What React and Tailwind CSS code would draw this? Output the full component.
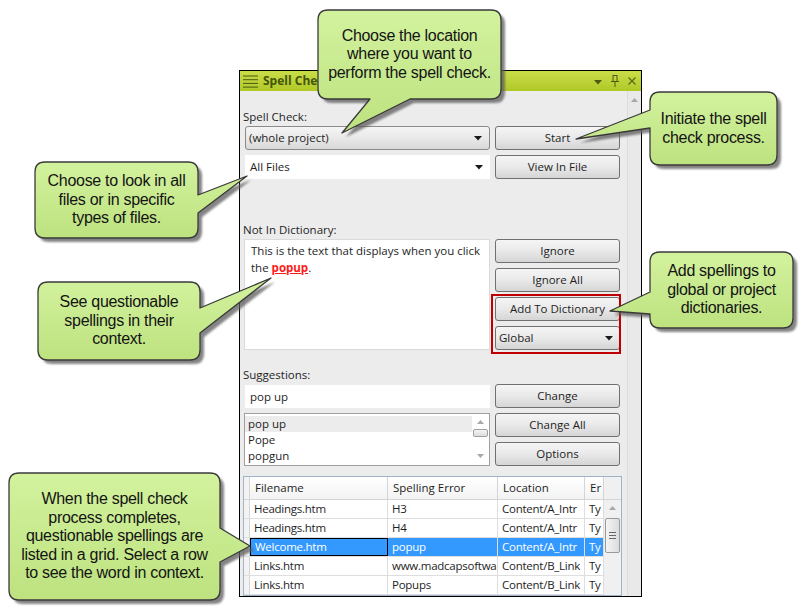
import React from "react";

const callouts = [
  { x: 318, y: 10, w: 183, h: 89, side: "bottom", a: 370, b: 410, tip: [342, 133], lines: ["Choose the location", "where you want to", "perform the spell check."] },
  { x: 650, y: 92, w: 127, h: 73, side: "left", a: 110, b: 128, tip: [576, 139], lines: ["Initiate the spell", "check process."] },
  { x: 35, y: 162, w: 163, h: 76, side: "right", a: 195, b: 213, tip: [247, 176], lines: ["Choose to look in all", "files or in specific", "types of files."] },
  { x: 38, y: 282, w: 162, h: 78, side: "right", a: 308, b: 333, tip: [271, 278], lines: ["See questionable", "spellings in their", "context."] },
  { x: 650, y: 252, w: 143, h: 76, side: "left", a: 292, b: 314, tip: [610, 311], lines: ["Add spellings to", "global or project", "dictionaries."] },
  { x: 9, y: 473, w: 211, h: 127, side: "right", a: 528, b: 562, tip: [250, 546], lines: ["When the spell check", "process completes,", "questionable spellings are", "listed in a grid. Select a row", "to see the word in context."] },
];

function calloutPath({ x, y, w, h, side, a, b, tip }, r = 10) {
  const [tx, ty] = tip;
  const R = x + w;
  const B = y + h;
  let d = `M${x + r},${y}`;
  if (side === "top") d += ` L${a},${y} L${tx},${ty} L${b},${y}`;
  d += ` L${R - r},${y} Q${R},${y} ${R},${y + r}`;
  if (side === "right") d += ` L${R},${a} L${tx},${ty} L${R},${b}`;
  d += ` L${R},${B - r} Q${R},${B} ${R - r},${B}`;
  if (side === "bottom") d += ` L${b},${B} L${tx},${ty} L${a},${B}`;
  d += ` L${x + r},${B} Q${x},${B} ${x},${B - r}`;
  if (side === "left") d += ` L${x},${b} L${tx},${ty} L${x},${a}`;
  d += ` L${x},${y + r} Q${x},${y} ${x + r},${y} Z`;
  return d;
}

function Arrow({ className = "" }) {
  return (
    <svg width="8" height="5" viewBox="0 0 8 5" className={className}>
      <path d="M0 0 H8 L4 4.5 Z" fill="#1a1a1a" />
    </svg>
  );
}

const btn =
  "h-[24px] w-[125px] shrink-0 rounded-[3px] border border-[#707070] bg-linear-to-b from-[#f5f5f5] via-[#e9e9e9] to-[#d5d5d5] flex items-center justify-center text-[#1e1e1e]";

function Btn({ children, className = "" }) {
  return <div className={`${btn} ${className}`}>{children}</div>;
}

function ScrollUp() {
  return (
    <svg width="7" height="4" viewBox="0 0 7 4">
      <path d="M0 4 L3.5 0 L7 4 Z" fill="#a8a8a8" />
    </svg>
  );
}
function ScrollDown() {
  return (
    <svg width="7" height="4" viewBox="0 0 7 4">
      <path d="M0 0 L3.5 4 L7 0 Z" fill="#a8a8a8" />
    </svg>
  );
}

const rows = [
  ["Headings.htm", "H3", "Content/A_Intr", "Ty"],
  ["Headings.htm", "H4", "Content/A_Intr", "Ty"],
  ["Welcome.htm", "popup", "Content/A_Intr", "Ty", true],
  ["Links.htm", "www.madcapsoftwa", "Content/B_Link", "Ty"],
  ["Links.htm", "Popups", "Content/B_Link", "Ty"],
];
const colW = ["w-[138px]", "w-[110px]", "w-[87px]", "w-[19px]"];

function Grid() {
  return (
    <div className="mt-[10px] w-[379px] h-[125px] border border-[#9fb3cb] bg-white flex flex-col overflow-hidden">
      <div className="flex h-[23px] shrink-0 border-b border-[#d5d5d5] bg-linear-to-b from-[#ffffff] to-[#f3f3f3]">
        <div className="w-[6px] border-r border-[#d5d5d5] bg-[#f3f3f3]" />
        {["Filename", "Spelling Error", "Location", "Er"].map((t, i) => (
          <div key={t} className={`${colW[i]} shrink-0 border-r border-[#d5d5d5] pl-[5px] flex items-center overflow-hidden whitespace-nowrap`}>
            {t}
          </div>
        ))}
        <div className="flex-1 bg-[#f0f0f0]" />
      </div>
      <div className="flex flex-1">
        <div className="flex flex-col">
          {rows.map((r, ri) => {
            const sel = r[4];
            return (
              <div key={ri} className={`flex h-[19px] shrink-0 border-b border-[#dedede] ${sel ? "bg-[#3399ff] text-white" : ""}`}>
                <div className="w-[6px] shrink-0 border-r border-[#d5d5d5] bg-[#f3f3f3]" />
                {r.slice(0, 4).map((c, ci) => (
                  <div
                    key={ci}
                    className={`${colW[ci]} shrink-0 pl-[4px] flex items-center overflow-hidden whitespace-nowrap tracking-[-0.25px] ${
                      sel && ci === 0 ? "border border-black" : "border-r border-[#dedede]"
                    }`}
                  >
                    {c}
                  </div>
                ))}
              </div>
            );
          })}
        </div>
        <div className="flex-1 bg-[#f0f0f0] flex flex-col items-center pt-[6px]">
          <ScrollUp />
          <div className="mt-[8px] w-[15px] h-[35px] rounded-[2px] border border-[#999] bg-linear-to-r from-[#f4f4f4] to-[#dcdcdc] flex flex-col items-center justify-center gap-[2px]">
            <div className="w-[7px] h-[1px] bg-[#666]" />
            <div className="w-[7px] h-[1px] bg-[#666]" />
            <div className="w-[7px] h-[1px] bg-[#666]" />
          </div>
        </div>
      </div>
    </div>
  );
}

function Panel() {
  return (
    <div className="ml-[239px] mt-[70px] w-[403px] h-[527px] border border-black flex flex-col bg-[#ececec] overflow-hidden">
      <div className="h-[20px] shrink-0 bg-linear-to-b from-[#cadd48] to-[#b0c826] flex items-center pl-[3px] pr-[5px] text-[#44550a]">
        <svg width="15" height="13" viewBox="0 0 15 13">
          <rect x="0" y="0.5" width="15" height="1" fill="#4a5a10" />
          <rect x="0" y="4.2" width="15" height="1" fill="#4a5a10" />
          <rect x="0" y="7.9" width="15" height="1" fill="#4a5a10" />
          <rect x="0" y="11.6" width="15" height="1" fill="#4a5a10" />
        </svg>
        <span className="ml-[5px] font-bold text-[12px]">Spell Check</span>
        <div className="flex-1" />
        <svg width="8" height="5" viewBox="0 0 8 5" className="mr-[9px] mt-[2px]">
          <path d="M0 0 H8 L4 4.5 Z" fill="#4a5a10" />
        </svg>
        <svg width="8" height="12" viewBox="0 0 8 12" className="mr-[9px]">
          <rect x="2" y="0.5" width="4" height="6" fill="none" stroke="#4a5a10" strokeWidth="1" />
          <line x1="0" y1="6.5" x2="8" y2="6.5" stroke="#4a5a10" strokeWidth="1" />
          <line x1="4" y1="6.5" x2="4" y2="12" stroke="#4a5a10" strokeWidth="1" />
        </svg>
        <svg width="8" height="8" viewBox="0 0 8 8">
          <path d="M0.5 0.5 L7.5 7.5 M7.5 0.5 L0.5 7.5" stroke="#5a6b18" strokeWidth="1.2" />
        </svg>
      </div>
      <div className="flex flex-1 min-h-0">
        <div className="flex-1 pl-[3px] flex flex-col text-[#1e1e1e]">
          <div className="mt-[18px] h-[16px] leading-[16px]">Spell Check:</div>
          <div className="mt-[1px] ml-[2px] flex gap-[5px]">
            <div className="h-[24px] w-[245px] rounded-[3px] border border-[#8a8a8a] bg-linear-to-b from-[#f5f5f5] via-[#e9e9e9] to-[#d8d8d8] flex items-center pl-[3px] pr-[7px]">
              <span className="flex-1">(whole project)</span>
              <Arrow />
            </div>
            <Btn>Start</Btn>
          </div>
          <div className="mt-[5px] ml-[2px] flex gap-[5px]">
            <div className="h-[24px] w-[245px] bg-white flex items-center pl-[5px] pr-[7px]">
              <span className="flex-1">All Files</span>
              <Arrow />
            </div>
            <Btn>View In File</Btn>
          </div>
          <div className="mt-[43px] h-[16px] leading-[16px]">Not In Dictionary:</div>
          <div className="mt-[1px] ml-[1px] flex gap-[5px]">
            <div className="h-[111px] w-[246px] bg-white border border-[#dadada] pl-[6px] pt-[2px] leading-[17px]">
              This is the text that displays when you click
              <br />
              the{" "}
              <span className="font-bold text-[#ff1a1a] underline">popup</span>.
            </div>
            <div className="flex flex-col gap-[5px] relative">
              <Btn>Ignore</Btn>
              <Btn>Ignore All</Btn>
              <Btn>Add To Dictionary</Btn>
              <div className={`${btn} justify-start pl-[3px] pr-[6px]`}>
                <span className="flex-1">Global</span>
                <Arrow />
              </div>
              <div className="absolute left-[-4px] top-[55px] w-[130px] h-[60px] border-2 border-[#c00000]" />
            </div>
          </div>
          <div className="mt-[17px] h-[16px] leading-[16px]">Suggestions:</div>
          <div className="mt-[1px] ml-[2px] flex gap-[5px]">
            <div className="mt-[1px] h-[23px] w-[245px] bg-white flex items-center pl-[5px]">pop up</div>
            <Btn>Change</Btn>
          </div>
          <div className="mt-[5px] ml-[1px] flex gap-[5px]">
            <div className="h-[53px] w-[246px] bg-white border border-[#a0a0a0] flex">
              <div className="flex-1 flex flex-col leading-[16px] pt-[2px]">
                <div className="bg-[#ececec] pl-[3px]">pop up</div>
                <div className="pl-[3px]">Pope</div>
                <div className="pl-[3px]">popgun</div>
              </div>
              <div className="w-[17px] flex flex-col items-center pt-[6px]">
                <ScrollUp />
                <div className="mt-[5px] w-[15px] h-[8px] rounded-[2px] border border-[#a0a0a0] bg-linear-to-b from-[#f4f4f4] to-[#dddddd]" />
                <div className="flex-1" />
                <div className="mb-[7px]">
                  <ScrollDown />
                </div>
              </div>
            </div>
            <div className="flex flex-col gap-[5px]">
              <Btn>Change All</Btn>
              <Btn>Options</Btn>
            </div>
          </div>
          <Grid />
        </div>
        <div className="w-[14px] shrink-0 border-l border-[#dcdcdc] bg-[#e9e9e9] flex flex-col items-center pt-[7px]">
          <ScrollUp />
        </div>
      </div>
    </div>
  );
}

export default function App() {
  return (
    <div className="relative w-[807px] h-[615px] bg-white overflow-hidden font-['Open_Sans',sans-serif] text-[11.5px]">
      <Panel />
      <svg className="absolute left-0 top-0 pointer-events-none" width="807" height="615" viewBox="0 0 807 615">
        <defs>
          <linearGradient id="cg" x1="0" y1="0" x2="0" y2="1">
            <stop offset="0" stopColor="#d3f29e" />
            <stop offset="1" stopColor="#bde27f" />
          </linearGradient>
          <filter id="blur" x="-10%" y="-10%" width="120%" height="120%">
            <feGaussianBlur stdDeviation="1.2" />
          </filter>
        </defs>
        {callouts.map((c, i) => (
          <g key={i}>
            <path d={calloutPath(c)} transform="translate(4,4)" fill="#5c5c5c" opacity="0.75" filter="url(#blur)" />
            <path d={calloutPath(c)} fill="url(#cg)" stroke="#3a3a3a" strokeWidth="1.3" strokeLinejoin="round" />
          </g>
        ))}
      </svg>
      {callouts.map((c, i) => (
        <div
          key={i}
          className="absolute flex flex-col items-center justify-center text-center font-['Liberation_Sans',Arial,sans-serif] text-[16px] leading-[18.5px] text-[#141414] tracking-[-0.3px]"
          style={{ left: c.x, top: c.y, width: c.w, height: c.h }}
        >
          {c.lines.map((l) => (
            <div key={l} className="whitespace-nowrap">{l}</div>
          ))}
        </div>
      ))}
    </div>
  );
}
